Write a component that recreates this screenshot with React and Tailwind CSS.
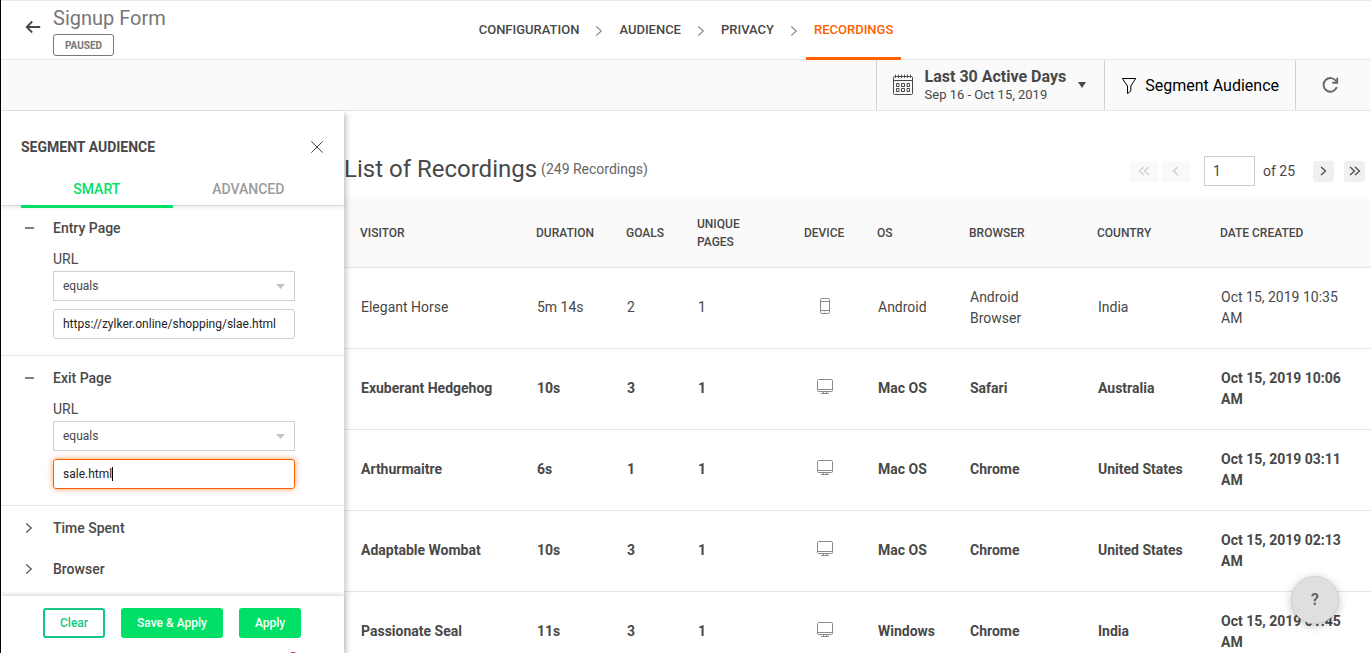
import { Fragment, useState } from "react";

const steps = ["Configuration", "Audience", "Privacy", "Recordings"];

const recordings = [
  { visitor: "Elegant Horse", duration: "5m 14s", goals: 2, pages: 1, device: "phone", os: "Android", browser: "Android Browser", country: "India", date: "Oct 15, 2019 10:35 AM", seen: true },
  { visitor: "Exuberant Hedgehog", duration: "10s", goals: 3, pages: 1, device: "desktop", os: "Mac OS", browser: "Safari", country: "Australia", date: "Oct 15, 2019 10:06 AM" },
  { visitor: "Arthurmaitre", duration: "6s", goals: 1, pages: 1, device: "desktop", os: "Mac OS", browser: "Chrome", country: "United States", date: "Oct 15, 2019 03:11 AM" },
  { visitor: "Adaptable Wombat", duration: "10s", goals: 3, pages: 1, device: "desktop", os: "Mac OS", browser: "Chrome", country: "United States", date: "Oct 15, 2019 02:13 AM" },
  { visitor: "Passionate Seal", duration: "11s", goals: 3, pages: 1, device: "desktop", os: "Windows", browser: "Chrome", country: "India", date: "Oct 15, 2019 01:45 AM" },
];

function Chevron({ className }) {
  return (
    <svg className={className} width="8" height="12" viewBox="0 0 8 12" fill="none" stroke="currentColor" strokeWidth="1.1">
      <path d="M1.300 1.500 6.300 6l-5 4.500" />
    </svg>
  );
}

function PageChevron({ className }) {
  return (
    <svg className={className} width="7" height="10" viewBox="0 0 7 10" fill="none" stroke="currentColor" strokeWidth="1.2">
      <path d="M1 1l4.500 4L1 9" />
    </svg>
  );
}

function BackIcon() {
  return (
    <svg width="16" height="14" viewBox="0 0 16 14" fill="none" stroke="currentColor" strokeWidth="1.8">
      <path d="M7.200 1.500 1.700 7l5.500 5.500M2 7h13.200" />
    </svg>
  );
}

function CloseIcon() {
  return (
    <svg width="14" height="14" viewBox="0 0 14 14" fill="none" stroke="currentColor">
      <path d="m1.300 1.300 11.400 11.400M12.700 1.300 1.300 12.700" />
    </svg>
  );
}

function CalendarIcon() {
  return (
    <svg width="20" height="22" viewBox="0 0 20 22" fill="none" stroke="currentColor">
      <rect x="0.5" y="2.5" width="19" height="18" rx="1" />
      <path d="M0.5 6.500h19" />
      <path d="M2.500 0.500v3.500M5.500 0.500v3.500M8.500 0.500v3.500M11.500 0.500v3.500M14.500 0.500v3.500M17.500 0.500v3.500" strokeWidth="0.900" />
      <path d="M3.500 9.500h2.500v3h-2.500zM8.500 9.500h3v3h-3zM14 9.500h2.500v3h-2.500zM3.500 14.500h2.500v3h-2.500zM8.500 14.500h3v3h-3zM14 14.500h2.500v3h-2.500z" />
    </svg>
  );
}

function FilterIcon() {
  return (
    <svg width="16" height="18" viewBox="0 0 16 18" fill="none" stroke="currentColor">
      <path d="M1.300 1.500h13.400L9.800 9v5l-3.300 2.500V9z" />
    </svg>
  );
}

function RefreshIcon() {
  return (
    <svg width="17" height="16" viewBox="0 0 17 16" fill="none" stroke="currentColor" strokeWidth="1.9">
      <path d="M14.800 10.200A6.800 6.800 0 1 1 14.200 4.300" />
      <path d="M15.200 0.800v5h-5" />
    </svg>
  );
}

function DeviceIcon({ device }) {
  if (device === "phone") {
    return (
      <svg className="inline-block" role="img" aria-label="Phone" width="12" height="16" viewBox="0 0 12 16" fill="none" stroke="currentColor">
        <rect x="1.5" y="0.5" width="9" height="15" rx="1.2" />
        <path d="M1.500 3.500h9M1.500 12.500h9M5.500 14h1" />
      </svg>
    );
  }
  return (
    <svg className="inline-block" role="img" aria-label="Desktop" width="16" height="16" viewBox="0 0 16 16" fill="none" stroke="currentColor">
      <rect x="0.5" y="0.5" width="15" height="12" rx="1" />
      <path d="M0.500 10.500h15M6.500 12.500v2M9.500 12.500v2M4 14.500h8" />
    </svg>
  );
}

function UrlSection({ id, title, initialValue, autoFocus }) {
  const [value, setValue] = useState(initialValue);
  const [focused, setFocused] = useState(Boolean(autoFocus));
  return (
    <section className="border-b border-[#e5e5e5] pt-3 pb-4">
      <button className="flex w-full items-center text-left text-sm leading-5 font-medium">
        <span className="flex w-13 pl-6">
          <svg width="9" height="2" viewBox="0 0 9 2">
            <path d="M0 1h9" stroke="currentColor" strokeWidth="1.400" />
          </svg>
        </span>
        {title}
      </button>
      <div className="mt-[11px] mr-[49px] ml-13">
        <label htmlFor={id} className="mb-0.5 block text-sm leading-5">
          URL
        </label>
        <div className="relative">
          <select
            aria-label={title + " condition"}
            className="block h-[30px] w-full appearance-none border border-[#d0d0d0] bg-white px-[9px] text-xs outline-none"
          >
            <option>equals</option>
            <option>contains</option>
          </select>
          <svg className="pointer-events-none absolute top-[13px] right-[10px]" width="9" height="5" viewBox="0 0 9 5" fill="#c4c4c4">
            <path d="M0 0h9L4.500 5z" />
          </svg>
        </div>
        <div className="relative mt-2">
          <input
            id={id}
            type="text"
            value={value}
            autoFocus={autoFocus}
            onFocus={() => setFocused(true)}
            onBlur={() => setFocused(false)}
            onChange={(e) => setValue(e.target.value)}
            className="block h-[30px] w-full rounded-[3px] border border-[#d0d0d0] px-[9px] text-xs text-[#222] caret-transparent outline-none focus:border-[#ff6000] focus:shadow-[0_0_6px_rgba(255,96,0,0.6)]"
          />
          {/* steady caret at the end of the text */}
          {focused && (
            <div aria-hidden="true" className="pointer-events-none absolute inset-0 flex items-center pl-[10px] text-xs">
              <span className="invisible whitespace-pre">{value}</span>
              <span className="h-[14px] w-px bg-black" />
            </div>
          )}
        </div>
      </div>
    </section>
  );
}

function CollapsedSection({ title }) {
  return (
    <button className="flex w-full items-center pt-3 pb-[9px] text-left text-sm leading-5 font-medium">
      <span className="flex w-13 pl-6">
        <Chevron />
      </span>
      {title}
    </button>
  );
}

function SegmentPanel() {
  return (
    <aside className="z-10 flex w-[343px] shrink-0 flex-col bg-white shadow-[3px_3px_5px_rgba(0,0,0,0.18)]">
      <div className="z-10 border-b border-[#dcdcdc] px-5 shadow-[0_2px_4px_rgba(0,0,0,0.08)]">
        <div className="flex items-center justify-between pt-[26px]">
          <h2 className="text-sm leading-5 font-bold">SEGMENT AUDIENCE</h2>
          <button aria-label="Close">
            <CloseIcon />
          </button>
        </div>
        <div className="mt-3 -mb-[3px] flex text-sm leading-5 font-medium">
          <button className="flex-1 border-b-3 border-[#00df66] pt-[10px] pb-[6px] text-[#00df66]">SMART</button>
          <button className="flex-1 border-b-3 border-transparent pt-[10px] pb-[6px] text-[#9b9b9b]">ADVANCED</button>
        </div>
      </div>
      <div className="min-h-0 flex-1 overflow-hidden">
        <UrlSection id="entry-url" title="Entry Page" initialValue="https://zylker.online/shopping/slae.html" />
        <UrlSection id="exit-url" title="Exit Page" initialValue="sale.html" autoFocus />
        <CollapsedSection title="Time Spent" />
        <CollapsedSection title="Browser" />
      </div>
      <div className="relative flex gap-4 bg-white pt-3 pb-[15px] pl-[42px] text-xs font-medium shadow-[0_-2px_4px_rgba(0,0,0,0.13)]">
        <button className="h-[30px] rounded-[3px] border-2 border-[#13c882] px-[15px] text-[#13c882]">Clear</button>
        <button className="h-[30px] rounded-[3px] bg-[#00df66] px-4 text-white">Save &amp; Apply</button>
        <button className="h-[30px] rounded-[3px] bg-[#00df66] px-4 text-white">Apply</button>
        <span className="absolute -bottom-[9px] left-[287px] size-[10px] rounded-full bg-[#e02020]" />
      </div>
    </aside>
  );
}

function Pagination() {
  const button = "flex h-[21px] items-center justify-center rounded-[3px] ";
  const disabled = button + "w-7 bg-[#f9f9f9] text-[#ccc]";
  const enabled = button + "w-[21px] bg-[#f0f0f0]";
  return (
    <div className="flex items-center pr-[6px] text-sm">
      <button disabled aria-label="First page" className={disabled + " mr-1"}>
        <PageChevron className="-mr-0.5 rotate-180" />
        <PageChevron className="rotate-180" />
      </button>
      <button disabled aria-label="Previous page" className={disabled + " mr-[14px]"}>
        <PageChevron className="rotate-180" />
      </button>
      <input aria-label="Page" defaultValue="1" className="h-[30px] w-[51px] border border-[#ccc] px-2 outline-none" />
      <span className="mr-[18px] ml-2">of 25</span>
      <button aria-label="Next page" className={enabled + " mr-[10px]"}>
        <PageChevron />
      </button>
      <button aria-label="Last page" className={enabled}>
        <PageChevron className="-mr-0.5" />
        <PageChevron />
      </button>
    </div>
  );
}

function RecordingsTable() {
  return (
    <table className="w-full table-fixed text-left">
      <colgroup>
        <col className="w-[176px]" />
        <col className="w-[90px]" />
        <col className="w-[71px]" />
        <col className="w-[107px]" />
        <col className="w-[73px]" />
        <col className="w-[92px]" />
        <col className="w-[128px]" />
        <col className="w-[123px]" />
        <col className="w-[167px]" />
      </colgroup>
      <thead>
        <tr className="h-[68px] border-b border-[#e5e5e5] bg-[#fafafa] text-xs leading-[18px] uppercase [&>th]:pl-4 [&>th]:font-medium">
          <th>Visitor</th>
          <th>Duration</th>
          <th>Goals</th>
          <th className="pr-10">Unique Pages</th>
          <th>Device</th>
          <th>OS</th>
          <th>Browser</th>
          <th>Country</th>
          <th>Date Created</th>
        </tr>
      </thead>
      <tbody>
        {recordings.map((r) => (
          <tr
            key={r.visitor}
            className={
              "h-[81px] border-b border-[#e5e5e5] text-sm leading-[21px] " +
              (r.seen ? "font-normal" : "font-bold")
            }
          >
            <td className="pl-[17px]">{r.visitor}</td>
            <td className="pl-[17px]">{r.duration}</td>
            <td className="pl-[17px]">{r.goals}</td>
            <td className="pl-[17px]">{r.pages}</td>
            <td className="pb-1 text-center text-[#8a8a8a]">
              <DeviceIcon device={r.device} />
            </td>
            <td className="pl-[17px]">{r.os}</td>
            <td className="pr-10 pl-[17px]">{r.browser}</td>
            <td className="pl-[17px]">{r.country}</td>
            <td className="pr-6 pl-[17px]">{r.date}</td>
          </tr>
        ))}
      </tbody>
    </table>
  );
}

export default function App() {
  return (
    <div className="flex h-screen flex-col overflow-hidden border-l border-black bg-white font-[Roboto,sans-serif] text-[#484848]">
      <header className="grid h-[60px] shrink-0 grid-cols-[1fr_auto_1fr] border-y border-[#e8e8e8]">
        <div className="flex">
          <button aria-label="Back" className="mt-[19px] mr-3 ml-6 h-[14px]">
            <BackIcon />
          </button>
          <div className="pt-[5px]">
            <h1 className="text-xl leading-6 text-[#777]">Signup Form</h1>
            <span className="mt-1 flex h-[22px] w-[61px] items-center justify-center rounded-[3px] border border-[#777] text-[10px] font-bold text-[#777]">
              PAUSED
            </span>
          </div>
        </div>
        <nav className="-mb-px flex text-[13px] font-medium uppercase">
          {steps.map((step, i) => (
            <Fragment key={step}>
              {i > 0 && (
                <span className="flex w-6 items-center justify-center text-[#888]">
                  <Chevron />
                </span>
              )}
              <a
                href="#"
                className={
                  "flex items-center border-b-3 px-2 pt-0.5 " +
                  (step === "Recordings" ? "border-[#ff6000] text-[#ff6000]" : "border-transparent")
                }
              >
                {step}
              </a>
            </Fragment>
          ))}
        </nav>
      </header>

      <div className="flex h-[51px] shrink-0 justify-end border-b border-[#e5e5e5] bg-[#fafafa]">
        <button className="flex items-center border-l border-[#d3d3d3] pr-[18px] pl-4 text-left">
          <CalendarIcon />
          <span className="mr-3 ml-3 pt-0.5">
            <span className="block text-base leading-[18px] font-bold">Last 30 Active Days</span>
            <span className="block text-[13px] leading-[18px]">Sep 16 - Oct 15, 2019</span>
          </span>
          <svg width="8" height="6" viewBox="0 0 8 6" fill="currentColor">
            <path d="M0 0h8L4 6z" />
          </svg>
        </button>
        <button className="flex items-center gap-2 border-l border-[#d3d3d3] px-4 pt-0.5 text-base text-black">
          <FilterIcon />
          Segment Audience
        </button>
        <button aria-label="Refresh" className="w-[76px] border-l border-[#d3d3d3] pl-[26px] text-[#666]">
          <RefreshIcon />
        </button>
      </div>

      <div className="flex min-h-0 flex-1">
        <SegmentPanel />
        <main className="min-w-0 flex-1">
          <div className="flex h-[88px] items-center justify-between pt-8">
            <h2 className="flex items-center gap-1 pb-1 text-2xl">
              List of Recordings <small className="text-sm text-[#666]">(249 Recordings)</small>
            </h2>
            <Pagination />
          </div>
          <RecordingsTable />
        </main>
      </div>

      <button
        aria-label="Help"
        className="fixed right-8 bottom-[29px] z-20 size-12 rounded-full border border-[#d2d2d2] bg-[#e0dfde] text-base font-bold text-[#666] shadow-[0_2px_8px_rgba(0,0,0,0.25)]"
      >
        ?
      </button>
    </div>
  );
}
